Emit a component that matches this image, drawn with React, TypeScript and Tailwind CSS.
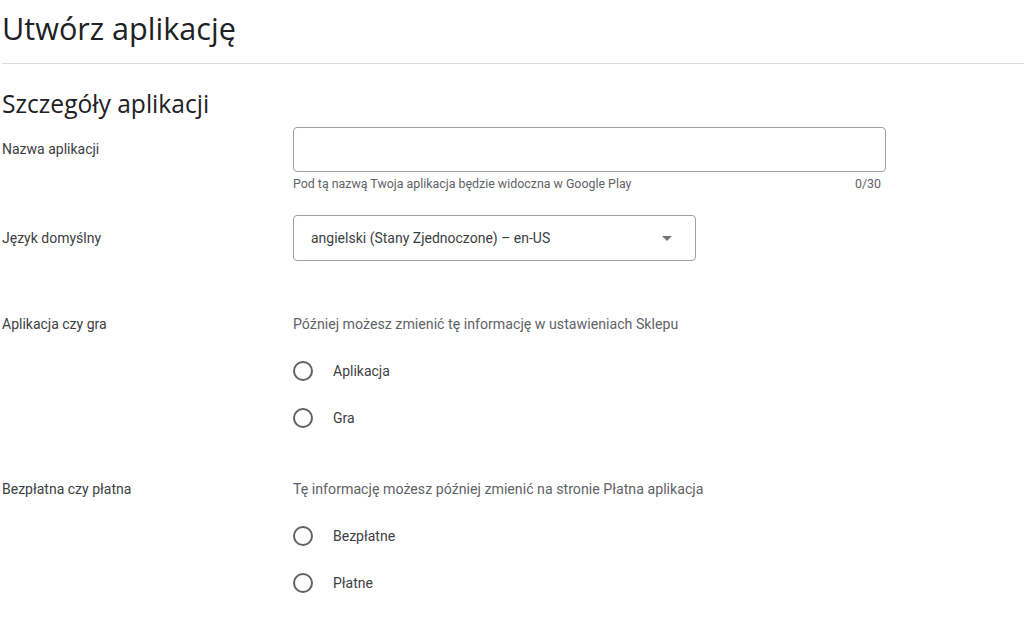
import React from 'react';

const body = { fontFamily: 'Roboto, "Noto Sans", sans-serif' };
const heading = { fontFamily: '"Open Sans", Roboto, sans-serif' };

interface RadioOptionProps {
  label: string;
}

// Simple unchecked radio row
const RadioOption: React.FC<RadioOptionProps> = ({ label }) => (
  <label className="flex h-[47px] items-center cursor-pointer">
    <span className="w-5 h-5 rounded-full border-2 border-[#5f6368] shrink-0" />
    <span className="ml-5 text-[14px] text-[#3c4043]">{label}</span>
  </label>
);

interface FieldRowProps {
  label: string;
  children: React.ReactNode;
  className?: string;
}

const FieldRow: React.FC<FieldRowProps> = ({ label, children, className = '' }) => (
  <div className={`flex ${className}`}>
    <div className="w-[291px] shrink-0 text-[14px] text-[#3c4043]">{label}</div>
    <div className="flex-1">{children}</div>
  </div>
);

export default function App() {
  return (
    <div className="min-h-screen bg-white pl-[2px]" style={body}>
      <div className="h-[64px] pt-[9px] border-b border-[#dadce0]">
        <h1 className="text-[30.6px] leading-[38px] text-[#202124]" style={heading}>
          Utwórz aplikację
        </h1>
      </div>

      <h2 className="mt-[25px] text-[24.6px] leading-[30px] text-[#202124]" style={heading}>
        Szczegóły aplikacji
      </h2>

      {/* Nazwa aplikacji */}
      <div className="mt-[8px] flex">
        <div className="w-[291px] shrink-0 h-[45px] flex items-center text-[14px] text-[#3c4043]">
          Nazwa aplikacji
        </div>
        <div className="w-[593px]">
          <input
            type="text"
            className="block w-full h-[45px] rounded border border-[#9aa0a6] px-4 text-[14px] outline-none"
          />
          <div className="mt-[4px] flex justify-between pr-[5px] text-[12.4px] leading-4 text-[#5f6368]">
            <span>Pod tą nazwą Twoja aplikacja będzie widoczna w Google Play</span>
            <span>0/30</span>
          </div>
        </div>
      </div>

      {/* Język domyślny */}
      <div className="mt-[23px] flex">
        <div className="w-[291px] shrink-0 h-[46px] flex items-center text-[14px] text-[#3c4043]">
          Język domyślny
        </div>
        <div className="w-[403px] h-[46px] rounded border border-[#9aa0a6] flex items-center justify-between pl-[17px] pr-[23px]">
          <span className="text-[14px] text-[#3c4043]">angielski (Stany Zjednoczone) – en-US</span>
          <svg width="10" height="5" viewBox="0 0 10 5">
            <path d="M0 0 L5 5 L10 0 Z" fill="#757575" />
          </svg>
        </div>
      </div>

      {/* Aplikacja czy gra */}
      <FieldRow label="Aplikacja czy gra" className="mt-[53px] leading-5">
        <div className="text-[14.2px] leading-5 text-[#5f6368]">
          Później możesz zmienić tę informację w ustawieniach Sklepu
        </div>
        <div className="mt-[13px]">
          <RadioOption label="Aplikacja" />
          <RadioOption label="Gra" />
        </div>
      </FieldRow>

      {/* Bezpłatna czy płatna */}
      <FieldRow label="Bezpłatna czy płatna" className="mt-[38px] leading-5">
        <div className="text-[14.2px] leading-5 text-[#5f6368]">
          Tę informację możesz później zmienić na stronie Płatna aplikacja
        </div>
        <div className="mt-[13px]">
          <RadioOption label="Bezpłatne" />
          <RadioOption label="Płatne" />
        </div>
      </FieldRow>
    </div>
  );
}
